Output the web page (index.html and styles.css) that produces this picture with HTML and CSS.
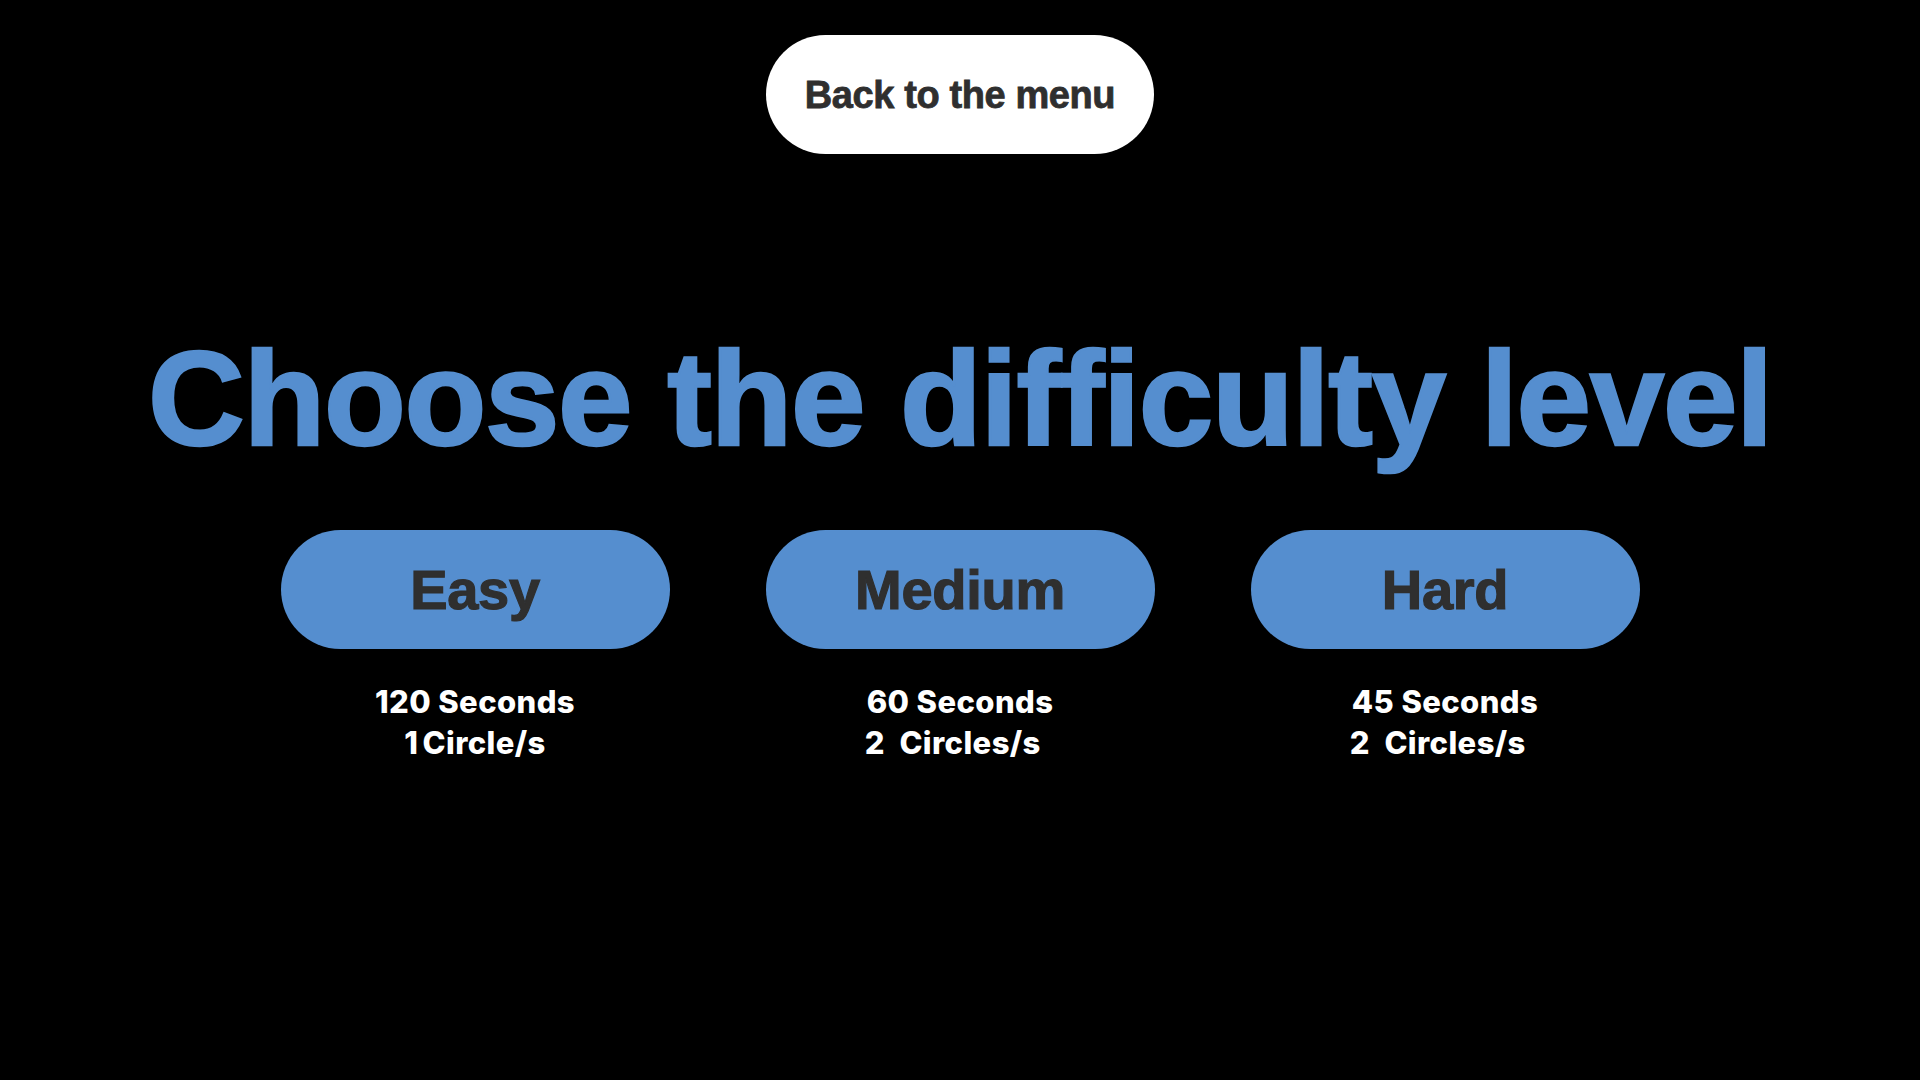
FILE: index.html
```html
<!DOCTYPE html>
<html lang="en">
<head>
<meta charset="utf-8">
<title>Choose the difficulty level</title>
<link rel="stylesheet" href="styles.css">
</head>
<body>
<main class="page">
  <button class="back-btn">Back to the menu</button>
  <h1 class="title">Choose the difficulty level</h1>
  <section class="levels">
    <div class="level">
      <button class="level-btn">Easy</button>
      <p class="level-info"><span>120 Seconds</span><span class="tight">1 Circle/s</span></p>
    </div>
    <div class="level">
      <button class="level-btn">Medium</button>
      <p class="level-info"><span>60 Seconds</span><span>2  Circles/s  </span></p>
    </div>
    <div class="level">
      <button class="level-btn">Hard</button>
      <p class="level-info"><span>45 Seconds</span><span>2  Circles/s  </span></p>
    </div>
  </section>
</main>
</body>
</html>
```
FILE: styles.css
```css
html, body {
  margin: 0;
  padding: 0;
  background: #000;
}

.page {
  width: 1920px;
  height: 1080px;
  display: flex;
  flex-direction: column;
  align-items: center;
  box-sizing: border-box;
  padding-top: 35px;
}

.back-btn {
  width: 388px;
  height: 119px;
  border: none;
  border-radius: 60px;
  background: #fff;
  color: #2f2f2f;
  font-family: "Liberation Sans", Arial, sans-serif;
  font-weight: 700;
  font-size: 38px;
  letter-spacing: -0.4px;
  -webkit-text-stroke: 0.8px #2f2f2f;
  padding: 2px 0 0;
  cursor: pointer;
}

.title {
  margin: 168px 0 0;
  font-family: "Liberation Sans", Arial, sans-serif;
  font-weight: 700;
  font-size: 134px;
  line-height: 154px;
  letter-spacing: -1.35px;
  color: #558ecf;
  -webkit-text-stroke: 2.5px #558ecf;
  white-space: nowrap;
}

.levels {
  margin-top: 54px;
  display: flex;
  gap: 96px;
}

.level {
  width: 389px;
  display: flex;
  flex-direction: column;
  align-items: center;
}

.level-btn {
  width: 389px;
  height: 119px;
  border: none;
  border-radius: 60px;
  background: #558ecf;
  color: #2f2f2f;
  font-family: "Liberation Sans", Arial, sans-serif;
  font-weight: 700;
  font-size: 56px;
  letter-spacing: -0.3px;
  -webkit-text-stroke: 1.2px #2f2f2f;
  padding: 0;
  cursor: pointer;
}

.level-info {
  margin: 32px 0 0;
  display: flex;
  flex-direction: column;
  align-items: center;
  font-family: Inter, "Liberation Sans", sans-serif;
  font-weight: 800;
  font-size: 31px;
  line-height: 41px;
  letter-spacing: 0.4px;
  color: #fff;
  white-space: pre;
}

.tight {
  word-spacing: -3px;
}
```
